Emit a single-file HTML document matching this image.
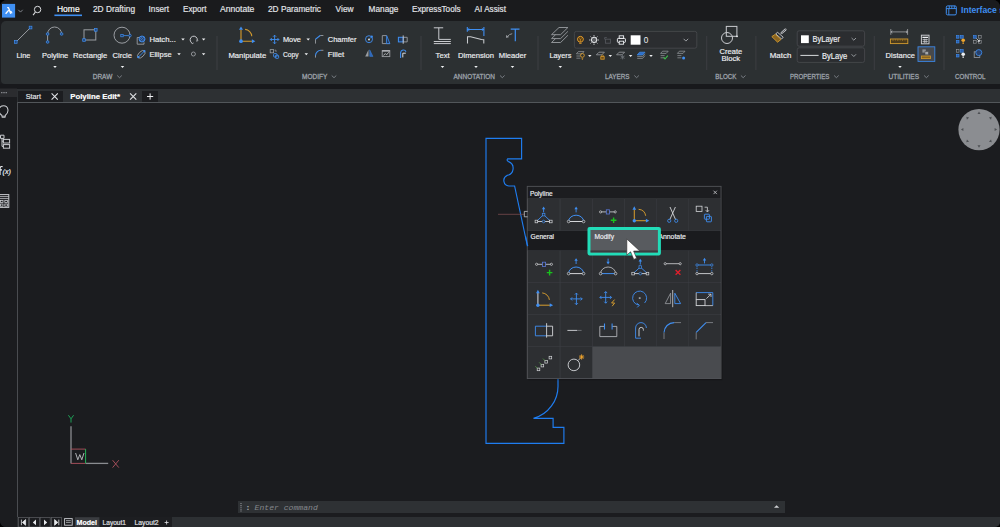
<!DOCTYPE html>
<html>
<head>
<meta charset="utf-8">
<title>Polyline Edit</title>
<style>
*{box-sizing:border-box;margin:0;padding:0}
html,body{width:1000px;height:527px;overflow:hidden;background:#000;font-family:"Liberation Sans",sans-serif}
#app{position:relative;width:1000px;height:527px;overflow:hidden;background:#1b1c1f;border-radius:7px 7px 5px 6px}
.a{position:absolute}
#menubar{left:0;top:0;width:1000px;height:21px;background:#1a1b1d}
#ribbon{left:1px;top:20.5px;width:1000px;height:63px;background:#2c3032;border-radius:5px 0 0 4px}
#band{left:0;top:83.5px;width:1000px;height:5px;background:#18191c}
#tabstrip{left:0;top:88.5px;width:1000px;height:14px;background:#2d3033}
#side{left:0;top:97px;width:17px;height:430px;background:#1b1c1f}
#tabline{left:17px;top:102px;width:983px;height:1px;background:#52565a}
#sideline{left:17px;top:102px;width:1px;height:415px;background:#4a4c50}
#tab1{left:18px;top:91px;width:44.5px;height:11px;background:#1c1d20}
#tab3{left:141.5px;top:91px;width:16.5px;height:11px;background:#1c1d20}
#bottombar{left:17px;top:516.5px;width:983px;height:11px;background:#2d3033}
#btabs{left:18px;top:517px;width:154px;height:10px;background:#1d1e21}
#cmd{left:238px;top:501px;width:547px;height:12px;background:#2e3134}
#svg{position:absolute;left:0;top:0;font-family:"Liberation Sans",sans-serif}
</style>
</head>
<body>
<div id="app">
<div class="a" id="menubar"></div>
<div class="a" id="ribbon"></div>
<div class="a" id="band"></div>
<div class="a" id="tabstrip"></div>
<div class="a" id="side"></div>
<div class="a" id="tab1"></div>
<div class="a" id="tab3"></div>
<div class="a" id="tabline"></div>
<div class="a" id="sideline"></div>
<div class="a" id="cmd"></div>
<div class="a" id="bottombar"></div>
<div class="a" id="btabs"></div>
<svg id="svg" width="1000" height="527" viewBox="0 0 1000 527">
<rect x="2" y="3.9" width="13.1" height="13.7" fill="#3f8ff2"/>
<path d="M7.2,7.6H8.5L10.7,13.7" stroke="#fff" stroke-width="1.3" fill="none" stroke-linejoin="round"/>
<path d="M8.8,10.1L5.6,13.8" stroke="#fff" stroke-width="1.4" fill="none"/>
<path d="M9.9,11.3Q12.1,11.3 11.7,13.4" stroke="#fff" stroke-width="1.1" fill="none"/>
<path d="M18.3,9.8l2.2,2.3l2.2,-2.3" fill="none" stroke="#8a8f96" stroke-width="0.9"/>
<circle cx="37.6" cy="9.5" r="3.2" fill="none" stroke="#dcdee1" stroke-width="1"/>
<path d="M35.4,12l-2.3,3.1" stroke="#dcdee1" stroke-width="1.1" fill="none"/>
<text x="57.0" y="11.70" font-size="8.6" fill="#ffffff" textLength="22.6" lengthAdjust="spacingAndGlyphs" stroke="#ffffff" stroke-width="0.18">Home</text>
<rect x="54.4" y="14.5" width="27.6" height="1.6" fill="#3f8ff2"/>
<text x="93.0" y="11.70" font-size="8.6" fill="#e2e4e8" textLength="42.0" lengthAdjust="spacingAndGlyphs" stroke="#e2e4e8" stroke-width="0.18">2D Drafting</text>
<text x="148.6" y="11.70" font-size="8.6" fill="#e2e4e8" textLength="20.4" lengthAdjust="spacingAndGlyphs" stroke="#e2e4e8" stroke-width="0.18">Insert</text>
<text x="183.0" y="11.70" font-size="8.6" fill="#e2e4e8" textLength="23.4" lengthAdjust="spacingAndGlyphs" stroke="#e2e4e8" stroke-width="0.18">Export</text>
<text x="220.0" y="11.70" font-size="8.6" fill="#e2e4e8" textLength="34.4" lengthAdjust="spacingAndGlyphs" stroke="#e2e4e8" stroke-width="0.18">Annotate</text>
<text x="268.0" y="11.70" font-size="8.6" fill="#e2e4e8" textLength="53.0" lengthAdjust="spacingAndGlyphs" stroke="#e2e4e8" stroke-width="0.18">2D Parametric</text>
<text x="335.6" y="11.70" font-size="8.6" fill="#e2e4e8" textLength="18.0" lengthAdjust="spacingAndGlyphs" stroke="#e2e4e8" stroke-width="0.18">View</text>
<text x="368.6" y="11.70" font-size="8.6" fill="#e2e4e8" textLength="29.8" lengthAdjust="spacingAndGlyphs" stroke="#e2e4e8" stroke-width="0.18">Manage</text>
<text x="412.0" y="11.70" font-size="8.6" fill="#e2e4e8" textLength="48.6" lengthAdjust="spacingAndGlyphs" stroke="#e2e4e8" stroke-width="0.18">ExpressTools</text>
<text x="474.6" y="11.70" font-size="8.6" fill="#e2e4e8" textLength="31.4" lengthAdjust="spacingAndGlyphs" stroke="#e2e4e8" stroke-width="0.18">AI Assist</text>
<rect x="946.3" y="5.9" width="10" height="9" rx="1.3" fill="none" stroke="#3f8ff2" stroke-width="1"/>
<path d="M946.3,8.6h10M948.8,8.6v6.3M949.3,5.9v2.7M951.8,5.9v2.7M954.3,5.9v2.7" stroke="#3f8ff2" stroke-width="0.9" fill="none"/>
<text x="961.0" y="13.10" font-size="8.6" fill="#3f8ff2" textLength="43.0" lengthAdjust="spacingAndGlyphs" font-weight="bold">Interface s</text>
<path d="M16,42L30.5,27.6" stroke="#9a9da2" stroke-width="1" fill="none"/>
<rect x="14.4" y="40.6" width="2.7" height="2.7" fill="#234a80" stroke="#3f8ff2" stroke-width="0.7"/>
<rect x="29.2" y="26.2" width="2.7" height="2.7" fill="#234a80" stroke="#3f8ff2" stroke-width="0.7"/>
<text x="16.5" y="58.12" font-size="8.1" fill="#eceef1" textLength="13.8" lengthAdjust="spacingAndGlyphs" stroke="#eceef1" stroke-width="0.18">Line</text>
<path d="M47.6,42V34A7,7 0 0 1 61.6,34" stroke="#9a9da2" stroke-width="1" fill="none"/>
<circle cx="47.6" cy="34" r="1.35" fill="#234a80" stroke="#3f8ff2" stroke-width="0.7"/>
<circle cx="61.6" cy="34" r="1.35" fill="#234a80" stroke="#3f8ff2" stroke-width="0.7"/>
<circle cx="47.6" cy="42" r="1.35" fill="#234a80" stroke="#3f8ff2" stroke-width="0.7"/>
<text x="42.0" y="58.12" font-size="8.1" fill="#eceef1" textLength="26.3" lengthAdjust="spacingAndGlyphs" stroke="#eceef1" stroke-width="0.18">Polyline</text>
<path d="M53.25,66.1h3.5l-1.75,1.9z" fill="#f0f1f3"/>
<rect x="84" y="29.8" width="11.8" height="10.2" fill="none" stroke="#9a9da2" stroke-width="1"/>
<rect x="94.5" y="28.6" width="2.6" height="2.6" fill="#234a80" stroke="#3f8ff2" stroke-width="0.7"/>
<rect x="82.7" y="38.7" width="2.6" height="2.6" fill="#234a80" stroke="#3f8ff2" stroke-width="0.7"/>
<text x="73.0" y="58.12" font-size="8.1" fill="#eceef1" textLength="34.3" lengthAdjust="spacingAndGlyphs" stroke="#eceef1" stroke-width="0.18">Rectangle</text>
<circle cx="122" cy="35.2" r="8" fill="none" stroke="#9a9da2" stroke-width="1"/>
<path d="M123.4,35.6H128.8" stroke="#3f8ff2" stroke-width="0.8"/>
<rect x="120.8" y="34.4" width="2.4" height="2.4" fill="#1f3558" stroke="#3f8ff2" stroke-width="0.7"/>
<circle cx="130" cy="35.6" r="1.25" fill="#1f3558" stroke="#3f8ff2" stroke-width="0.7"/>
<text x="112.6" y="58.12" font-size="8.1" fill="#eceef1" textLength="19.4" lengthAdjust="spacingAndGlyphs" stroke="#eceef1" stroke-width="0.18">Circle</text>
<path d="M120.75,66.1h3.5l-1.75,1.9z" fill="#f0f1f3"/>
<path d="M139.5,37.5H137.2V44.2H144V42.3" stroke="#9a9da2" stroke-width="0.9" fill="none"/>
<circle cx="142" cy="39" r="3" fill="#24487c" stroke="#3f8ff2" stroke-width="0.9"/>
<path d="M140,41l4,-4M139.4,39.4l2.6,-2.6M142,41.6l2.6,-2.6" stroke="#6fa8f5" stroke-width="0.45"/>
<text x="149.4" y="42.22" font-size="8.1" fill="#eceef1" textLength="26.5" lengthAdjust="spacingAndGlyphs" stroke="#eceef1" stroke-width="0.18">Hatch...</text>
<path d="M181.25,38.6h3.5l-1.75,1.9z" fill="#f0f1f3"/>
<path d="M191.5,42.6A3.6,3.6 0 1 1 197.3,40.2" stroke="#c9cbcf" stroke-width="1" fill="none"/>
<path d="M191.3,42.4a1.2,1.2 0 0 0 2.2,0.6M196,40.5a1.1,1.1 0 0 0 2,-0.3" stroke="#c9cbcf" stroke-width="0.9" fill="none"/>
<path d="M201.85,38.6h3.5l-1.75,1.9z" fill="#f0f1f3"/>
<ellipse cx="141.3" cy="54.3" rx="4.6" ry="2.6" transform="rotate(-45 141.3 54.3)" fill="none" stroke="#9a9da2" stroke-width="0.9"/>
<path d="M138.5,57l5.6,-5.6" stroke="#3f8ff2" stroke-width="0.9"/>
<circle cx="138.3" cy="57.2" r="1.1" fill="#3f8ff2"/><circle cx="144.4" cy="51.2" r="1.1" fill="#3f8ff2"/>
<text x="149.4" y="56.82" font-size="8.1" fill="#eceef1" textLength="22.2" lengthAdjust="spacingAndGlyphs" stroke="#eceef1" stroke-width="0.18">Ellipse</text>
<path d="M177.25,53.3h3.5l-1.75,1.9z" fill="#f0f1f3"/>
<circle cx="193.4" cy="54" r="2" fill="none" stroke="#9a9da2" stroke-width="0.9"/>
<path d="M201.85,53.3h3.5l-1.75,1.9z" fill="#f0f1f3"/>
<text x="92.7" y="79.08" font-size="6.9" fill="#9ea3ab" textLength="19.6" lengthAdjust="spacingAndGlyphs" stroke="#9ea3ab" stroke-width="0.28">DRAW</text>
<path d="M117.2,75.5l2.3,2.2l2.3,-2.2" fill="none" stroke="#8b9098" stroke-width="0.8"/>
<rect x="216.5" y="36" width="1" height="34" fill="#3c3e42"/>
<path d="M241,41.2V29.400000000000002" stroke="#d29a2e" stroke-width="1.1440000000000001" fill="none"/>
<path d="M241,41.2H252.3" stroke="#d29a2e" stroke-width="1.1440000000000001" fill="none"/>
<path d="M238.976,29.800000000000004L241,26.400000000000002L243.024,29.800000000000004z" fill="#3f8ff2"/>
<path d="M251.9,39.176L255.3,41.2L251.9,43.224000000000004z" fill="#3f8ff2"/>
<path d="M245.1,29.4A7.4,7.4 0 0 1 251.8,36.2" stroke="#d29a2e" stroke-width="1.056" fill="none"/>
<circle cx="241" cy="41.2" r="1.848" fill="#3f8ff2"/>
<text x="228.4" y="58.12" font-size="8.1" fill="#eceef1" textLength="37.8" lengthAdjust="spacingAndGlyphs" stroke="#eceef1" stroke-width="0.18">Manipulate</text>
<path d="M270.3,39.5H278.90000000000003M274.6,35.2V43.8" stroke="#3f8ff2" stroke-width="0.9" fill="none"/>
<path d="M273.1,36.7L274.6,35.2L276.1,36.7M273.1,42.3L274.6,43.8L276.1,42.3M271.8,38.0L270.3,39.5L271.8,41.0M277.40000000000003,38.0L278.90000000000003,39.5L277.40000000000003,41.0" stroke="#3f8ff2" stroke-width="0.9" fill="none"/>
<text x="282.9" y="42.22" font-size="8.1" fill="#eceef1" textLength="18.1" lengthAdjust="spacingAndGlyphs" stroke="#eceef1" stroke-width="0.18">Move</text>
<path d="M306.45,38.6h3.5l-1.75,1.9z" fill="#f0f1f3"/>
<rect x="270.2" y="49.6" width="3.4" height="3.2" fill="none" stroke="#9a9da2" stroke-width="0.8"/>
<path d="M274.6,50.2h1.4v1.8" stroke="#9a9da2" stroke-width="0.7" fill="none"/>
<rect x="273.6" y="53.6" width="3.4" height="3.4" rx="0.8" fill="none" stroke="#3f8ff2" stroke-width="0.9"/>
<rect x="275.4" y="55.2" width="3.2" height="3.2" rx="0.8" fill="none" stroke="#3f8ff2" stroke-width="0.9"/>
<text x="282.9" y="56.82" font-size="8.1" fill="#eceef1" textLength="15.6" lengthAdjust="spacingAndGlyphs" stroke="#eceef1" stroke-width="0.18">Copy</text>
<path d="M304.55,53.3h3.5l-1.75,1.9z" fill="#f0f1f3"/>
<path d="M315.5,43.6V39.2" stroke="#9a9da2" stroke-width="0.9"/><path d="M320.2,35.5H323.4" stroke="#9a9da2" stroke-width="0.9"/>
<path d="M315.5,39.2L320.2,35.5" stroke="#3f8ff2" stroke-width="1.1" fill="none"/>
<text x="327.8" y="42.22" font-size="8.1" fill="#eceef1" textLength="28.7" lengthAdjust="spacingAndGlyphs" stroke="#eceef1" stroke-width="0.18">Chamfer</text>
<path d="M315.5,57.6V55" stroke="#9a9da2" stroke-width="0.9"/><path d="M321,50.3H323.4" stroke="#9a9da2" stroke-width="0.9"/>
<path d="M315.5,55.5A5.4,5.4 0 0 1 321,50.3" stroke="#3f8ff2" stroke-width="1.1" fill="none"/>
<text x="327.8" y="56.82" font-size="8.1" fill="#eceef1" textLength="16.4" lengthAdjust="spacingAndGlyphs" stroke="#eceef1" stroke-width="0.18">Fillet</text>
<circle cx="369" cy="39.2" r="3.5" fill="none" stroke="#3f8ff2" stroke-width="0.9"/>
<circle cx="369" cy="39.5" r="0.9" fill="#eceef1"/>
<path d="M369.6,38.8L371.6,36.8" stroke="#3f8ff2" stroke-width="0.8"/><circle cx="371.8" cy="36.7" r="1.1" fill="#3f8ff2"/>
<path d="M386.7,35.6H382.3V43.6H389.8" fill="none" stroke="#9a9da2" stroke-width="0.9"/>
<path d="M386.7,35.6L389.9,43.6H386.4z" fill="#203a62" stroke="#3f8ff2" stroke-width="0.8"/>
<rect x="398.4" y="37.3" width="4.8" height="4.6" fill="#203a62" stroke="#3f8ff2" stroke-width="1"/>
<path d="M403.2,37.3H407.2V41.9H403.2" fill="none" stroke="#9a9da2" stroke-width="0.9"/>
<path d="M403.2,35.4V43.8" stroke="#c9cbcf" stroke-width="0.9"/>
<path d="M368.5,49.8V56.4H365.2z" fill="#9a9da2"/>
<path d="M369.7,49.8V56.4H373z" fill="#2f66b8" stroke="#3f8ff2" stroke-width="0.4"/>
<rect x="382.2" y="50.6" width="7.6" height="6" fill="none" stroke="#9a9da2" stroke-width="0.9"/>
<path d="M382.2,51H389.8" stroke="#c9cbcf" stroke-width="1.1"/>
<path d="M383.4,55.4l2,-1.8l1.2,1.2l2.2,-2.6" stroke="#c9cbcf" stroke-width="0.8" fill="none"/>
<path d="M400.6,58V52.6A2.8,2.8 0 0 1 406,51.8" stroke="#3f8ff2" stroke-width="1.1" fill="none"/>
<path d="M402.8,57.4V53.2H405.8" stroke="#eceef1" stroke-width="0.9" fill="none"/>
<text x="302.0" y="79.08" font-size="6.9" fill="#9ea3ab" textLength="25.3" lengthAdjust="spacingAndGlyphs" stroke="#9ea3ab" stroke-width="0.28">MODIFY</text>
<path d="M331.7,75.5l2.3,2.2l2.3,-2.2" fill="none" stroke="#8b9098" stroke-width="0.8"/>
<rect x="420.5" y="36" width="1" height="34" fill="#3c3e42"/>
<path d="M433.8,27.8H443.2M438.8,27.8V39.4H450.8M433.8,41.5H450.8M433.8,43.6H450.8" stroke="#c9cbcf" stroke-width="1" fill="none"/>
<text x="435.6" y="58.12" font-size="8.1" fill="#eceef1" textLength="14.0" lengthAdjust="spacingAndGlyphs" stroke="#eceef1" stroke-width="0.18">Text</text>
<path d="M440.75,66.1h3.5l-1.75,1.9z" fill="#f0f1f3"/>
<path d="M467.3,29.5H483.9M467.3,26.9V31.8M483.9,26.9V36" stroke="#3f8ff2" stroke-width="1.1" fill="none"/>
<path d="M469.4,28.2L467.6,29.5L469.4,30.8M481.8,28.2L483.6,29.5L481.8,30.8" stroke="#3f8ff2" stroke-width="0.8" fill="none"/>
<path d="M467.5,43.6V36.8H470.6L481.4,39.5L483.8,39.8V43.6" stroke="#c9cbcf" stroke-width="1.05" fill="none"/>
<text x="458.1" y="58.12" font-size="8.1" fill="#eceef1" textLength="35.9" lengthAdjust="spacingAndGlyphs" stroke="#eceef1" stroke-width="0.18">Dimension</text>
<path d="M474.25,66.1h3.5l-1.75,1.9z" fill="#f0f1f3"/>
<path d="M510.7,29.2H519.5M515.3,29.2V41.2" stroke="#3f8ff2" stroke-width="1.2" fill="none"/>
<path d="M512.2,33.7Q509,34.2 507.4,36.6" stroke="#9a9da2" stroke-width="0.9" fill="none"/>
<path d="M506,34.9L506.2,38L509.2,37z" fill="#9a9da2"/>
<text x="498.8" y="58.12" font-size="8.1" fill="#eceef1" textLength="27.5" lengthAdjust="spacingAndGlyphs" stroke="#eceef1" stroke-width="0.18">Mleader</text>
<path d="M510.75,66.1h3.5l-1.75,1.9z" fill="#f0f1f3"/>
<text x="453.5" y="79.08" font-size="6.9" fill="#9ea3ab" textLength="41.5" lengthAdjust="spacingAndGlyphs" stroke="#9ea3ab" stroke-width="0.28">ANNOTATION</text>
<path d="M500.0,75.5l2.3,2.2l2.3,-2.2" fill="none" stroke="#8b9098" stroke-width="0.8"/>
<rect x="537.5" y="36" width="1" height="34" fill="#3c3e42"/>
<path d="M559,27.5H567.9L560.6,34.7H551.5z" fill="none" stroke="#9a9da2" stroke-width="0.9"/>
<path d="M555.6,34.7L551.5,38.6H560.6L567.9,31.4" fill="none" stroke="#9a9da2" stroke-width="0.9"/>
<path d="M555.6,38.6L551.5,42.5H560.6L567.9,35.3" fill="none" stroke="#9a9da2" stroke-width="0.9"/>
<text x="549.4" y="58.12" font-size="8.1" fill="#eceef1" textLength="21.9" lengthAdjust="spacingAndGlyphs" stroke="#eceef1" stroke-width="0.18">Layers</text>
<path d="M558.55,66.1h3.5l-1.75,1.9z" fill="#f0f1f3"/>
<rect x="574.4" y="31.4" width="122.4" height="16.8" rx="2" fill="#2b2d30" stroke="#46484c" stroke-width="0.9"/>
<path d="M579.1,42C577.5,40.6 577.3,39.6 577.5,38.6A3,3 0 0 1 583.3,38.6C583.5,39.6 583.3,40.6 581.7,42z" fill="#5a3f14" stroke="#e8a02c" stroke-width="1"/>
<path d="M579.2,43.3h2.4" stroke="#e8a02c" stroke-width="0.9"/>
<path d="M580.4,41.8V39.4M579.4,38.4l1,1.1l1,-1.1" stroke="#e8a02c" stroke-width="0.6" fill="none"/>
<circle cx="594.1" cy="39.9" r="2.7" fill="#5c5e62" stroke="#eceef1" stroke-width="1"/>
<path d="M594,35.2v1.2M594,43.6v1.2M589.2,40h1.2M597.6,40h1.2M590.6,36.6l0.9,0.9M596.5,42.5l0.9,0.9M590.6,43.4l0.9,-0.9M596.5,37.5l0.9,-0.9" stroke="#eceef1" stroke-width="0.9"/>
<path d="M604.6,39.4V37.6H606.8" stroke="#54575c" stroke-width="0.9" fill="none"/><rect x="605.4" y="39.2" width="5" height="4" fill="none" stroke="#54575c" stroke-width="0.9"/>
<rect x="619.2" y="35.8" width="4.4" height="2.6" fill="none" stroke="#eceef1" stroke-width="0.9"/>
<rect x="617.4" y="38.4" width="8" height="4" rx="0.8" fill="none" stroke="#eceef1" stroke-width="1"/>
<rect x="619.2" y="41.2" width="4.4" height="3" fill="#2b2d30" stroke="#eceef1" stroke-width="0.9"/>
<rect x="630.7" y="35.3" width="9.8" height="9.4" fill="#ffffff"/>
<text x="643.8" y="42.95" font-size="8.2" fill="#eceef1">0</text>
<path d="M683.6,38.8l2.3,2.3l2.3,-2.3" fill="none" stroke="#b4b7bc" stroke-width="0.8"/>
<path d="M578.4,51.6H584L582,53.800000000000004H576.4z" stroke="#9a9da2" stroke-width="0.7" fill="none"/>
<path d="M576.4,56.0H580.4M576.4,58.2H580.4" stroke="#9a9da2" stroke-width="0.7" fill="none"/>
<circle cx="582.4" cy="55.4" r="1.9" fill="none" stroke="#d79a2c" stroke-width="0.9"/><path d="M581.6,58.4h1.6M581.8,59.4h1.2" stroke="#d79a2c" stroke-width="0.7"/>
<path d="M588.05,55.1h3.5l-1.75,1.9z" fill="#f0f1f3"/>
<path d="M599.0,52.2H604.4L601.8,54.800000000000004H596.4z" fill="none" stroke="#9a9da2" stroke-width="0.8"/>
<rect x="600.8" y="56.6" width="3.4" height="2.6" fill="#6b4a16" stroke="#d79a2c" stroke-width="0.8"/><path d="M601.6,56.6V55.8A0.9,0.9 0 0 1 603.4,55.8V56.6" stroke="#d79a2c" stroke-width="0.7" fill="none"/>
<path d="M608.55,55.1h3.5l-1.75,1.9z" fill="#f0f1f3"/>
<path d="M619.2,52.2H624.6L622.0,54.800000000000004H616.6z" fill="none" stroke="#9a9da2" stroke-width="0.8"/>
<path d="M622.6,55v4.4M620.6,56l4,2.4M620.6,58.4l4,-2.4" stroke="#6f7379" stroke-width="0.8"/>
<path d="M628.85,55.1h3.5l-1.75,1.9z" fill="#f0f1f3"/>
<path d="M639.6,52.2H645L642.6,55H637.2z" fill="#2f6fc8" stroke="#3f8ff2" stroke-width="0.7"/>
<path d="M637.2,56.6H642.6L645,53.8M637.2,58.4H642.6L645,55.6" fill="none" stroke="#9a9da2" stroke-width="0.7"/>
<path d="M649.25,55.1h3.5l-1.75,1.9z" fill="#f0f1f3"/>
<path d="M662.6,51.2H668.2L666.2,53.400000000000006H660.6z" stroke="#9a9da2" stroke-width="0.7" fill="none"/>
<path d="M660.6,55.6H664.6M660.6,57.800000000000004H664.6" stroke="#9a9da2" stroke-width="0.7" fill="none"/>
<path d="M663.6,57.4l1.4,1.6l2.8,-3.4" stroke="#3cc04a" stroke-width="1.1" fill="none"/>
<path d="M679.4,51.2H685L683,53.400000000000006H677.4z" stroke="#9a9da2" stroke-width="0.7" fill="none"/>
<path d="M677.4,55.6H681.4M677.4,57.800000000000004H681.4" stroke="#9a9da2" stroke-width="0.7" fill="none"/>
<circle cx="683.6" cy="58" r="1.5" fill="#3f8ff2"/>
<text x="605.0" y="79.08" font-size="6.9" fill="#9ea3ab" textLength="24.4" lengthAdjust="spacingAndGlyphs" stroke="#9ea3ab" stroke-width="0.28">LAYERS</text>
<path d="M634.3,75.5l2.3,2.2l2.3,-2.2" fill="none" stroke="#8b9098" stroke-width="0.8"/>
<rect x="706.2" y="36" width="1" height="34" fill="#3c3e42"/>
<circle cx="727" cy="38" r="5.5" fill="none" stroke="#c9cbcf" stroke-width="1"/>
<rect x="726.3" y="26.4" width="10.6" height="9.9" fill="none" stroke="#c9cbcf" stroke-width="1"/>
<circle cx="737" cy="36.3" r="0.9" fill="#eceef1"/>
<text x="719.6" y="54.42" font-size="8.1" fill="#eceef1" textLength="22.6" lengthAdjust="spacingAndGlyphs" stroke="#eceef1" stroke-width="0.18">Create</text>
<text x="721.5" y="60.92" font-size="8.1" fill="#eceef1" textLength="18.5" lengthAdjust="spacingAndGlyphs" stroke="#eceef1" stroke-width="0.18">Block</text>
<text x="715.3" y="79.08" font-size="6.9" fill="#9ea3ab" textLength="21.2" lengthAdjust="spacingAndGlyphs" stroke="#9ea3ab" stroke-width="0.28">BLOCK</text>
<path d="M740.9,75.5l2.3,2.2l2.3,-2.2" fill="none" stroke="#8b9098" stroke-width="0.8"/>
<rect x="755.4" y="36" width="1" height="34" fill="#3c3e42"/>
<path d="M785.4,29.6L781.6,33" stroke="#c9cbcf" stroke-width="2.2" stroke-linecap="round" fill="none"/>
<path d="M785.4,29.6L781.6,33" stroke="#2d2f32" stroke-width="0.8" stroke-linecap="round" fill="none"/>
<path d="M777.4,32.2L783.2,37.2L781.6,39L775.8,34z" fill="none" stroke="#c9cbcf" stroke-width="0.9"/>
<path d="M775.2,34.4L781,39.4L777.6,42.2L771.8,36.6z" fill="#8a6420" stroke="#d29a2e" stroke-width="0.9"/>
<text x="769.8" y="58.12" font-size="8.1" fill="#eceef1" textLength="21.5" lengthAdjust="spacingAndGlyphs" stroke="#eceef1" stroke-width="0.18">Match</text>
<rect x="797.2" y="30.8" width="67.4" height="15.4" rx="2" fill="#2b2d30" stroke="#46484c" stroke-width="0.9"/>
<rect x="797.2" y="47.8" width="67.4" height="14.6" rx="2" fill="#2b2d30" stroke="#46484c" stroke-width="0.9"/>
<rect x="801" y="35.3" width="7.8" height="7.8" fill="#ffffff"/>
<text x="812.5" y="42.30" font-size="8.6" fill="#eceef1" textLength="27.5" lengthAdjust="spacingAndGlyphs" stroke="#eceef1" stroke-width="0.18">ByLayer</text>
<path d="M851.6,38.0l2.2,2.2l2.2,-2.2" fill="none" stroke="#b4b7bc" stroke-width="0.8"/>
<path d="M800.4,55.4H818.6" stroke="#eceef1" stroke-width="0.9"/>
<text x="821.9" y="58.50" font-size="8.6" fill="#eceef1" textLength="25.3" lengthAdjust="spacingAndGlyphs" stroke="#eceef1" stroke-width="0.18">ByLaye</text>
<path d="M851.6,54.3l2.2,2.2l2.2,-2.2" fill="none" stroke="#b4b7bc" stroke-width="0.8"/>
<text x="790.0" y="79.08" font-size="6.9" fill="#9ea3ab" textLength="39.4" lengthAdjust="spacingAndGlyphs" stroke="#9ea3ab" stroke-width="0.28">PROPERTIES</text>
<path d="M834.1,75.5l2.3,2.2l2.3,-2.2" fill="none" stroke="#8b9098" stroke-width="0.8"/>
<rect x="873.8" y="36" width="1" height="34" fill="#3c3e42"/>
<path d="M890.8,31.9H907.6M890.8,29V34.8M907.6,29V34.8M892.4,30.8L891,31.9L892.4,33M906,30.8L907.4,31.9L906,33" stroke="#b4b6ba" stroke-width="0.7" fill="none"/>
<rect x="890.4" y="39" width="17.4" height="4.6" fill="#4a3a1c" stroke="#d29a2e" stroke-width="0.9"/>
<path d="M893,39.4v1.6M895.4,39.4v1.2M897.8,39.4v1.6M900.2,39.4v1.2M902.6,39.4v1.6M905,39.4v1.2" stroke="#d29a2e" stroke-width="0.5"/>
<text x="885.6" y="58.12" font-size="8.1" fill="#eceef1" textLength="29.4" lengthAdjust="spacingAndGlyphs" stroke="#eceef1" stroke-width="0.18">Distance</text>
<path d="M898.25,66.1h3.5l-1.75,1.9z" fill="#f0f1f3"/>
<rect x="921.4" y="35.2" width="7.6" height="8.6" fill="none" stroke="#c9cbcf" stroke-width="1"/>
<path d="M922.4,37.4h5.6" stroke="#eceef1" stroke-width="1.2"/><path d="M922.6,39.6h5.2M922.6,41.6h5.2M924.3,38.6v4.4M926.1,38.6v4.4" stroke="#c9cbcf" stroke-width="0.8"/>
<rect x="918" y="46.8" width="16.8" height="14.6" fill="#47494d" stroke="#3a86e6" stroke-width="0.9"/>
<rect x="922.4" y="49.4" width="3.4" height="3.2" fill="#8e9196"/><rect x="925" y="51.6" width="3.4" height="3.2" fill="#a4a7ab" stroke="#47494d" stroke-width="0.5"/>
<rect x="921.6" y="56" width="8.8" height="2.6" fill="#8a6420" stroke="#d29a2e" stroke-width="0.8"/>
<text x="888.5" y="79.08" font-size="6.9" fill="#9ea3ab" textLength="30.5" lengthAdjust="spacingAndGlyphs" stroke="#9ea3ab" stroke-width="0.28">UTILITIES</text>
<path d="M924.1,75.5l2.3,2.2l2.3,-2.2" fill="none" stroke="#8b9098" stroke-width="0.8"/>
<rect x="943.5" y="36" width="1" height="34" fill="#3c3e42"/>
<rect x="956.4" y="35.6" width="2.6" height="2.6" fill="#2a5caa" stroke="#3f8ff2" stroke-width="0.6"/>
<rect x="960.6" y="35.6" width="2.6" height="2.6" fill="#2a5caa" stroke="#3f8ff2" stroke-width="0.6"/>
<rect x="956.4" y="40.4" width="2.6" height="2.6" fill="#2a5caa" stroke="#3f8ff2" stroke-width="0.6"/>
<circle cx="963.2" cy="40.2" r="1.8" fill="#f0a52c"/><path d="M962.4,42.4h1.6v1.4h-1.6z" fill="#f0a52c"/>
<rect x="973.6" y="35.6" width="2.6" height="2.6" fill="#2a5caa" stroke="#3f8ff2" stroke-width="0.6"/>
<rect x="978.6" y="35.6" width="2.6" height="2.6" fill="none" stroke="#9a9da2" stroke-width="0.6"/>
<rect x="973.6" y="40.6" width="2.6" height="2.6" fill="none" stroke="#9a9da2" stroke-width="0.6"/>
<rect x="978.6" y="40.6" width="2.6" height="2.6" fill="none" stroke="#9a9da2" stroke-width="0.6"/>
<path d="M976.4,38.4l3,3M979.4,39.6v1.8h-1.8" stroke="#eceef1" stroke-width="0.7" fill="none"/>
<rect x="956.4" y="49.6" width="2.6" height="2.6" fill="none" stroke="#9a9da2" stroke-width="0.6"/>
<rect x="960.6" y="49.6" width="2.6" height="2.6" fill="#2a5caa" stroke="#3f8ff2" stroke-width="0.6"/>
<rect x="956.4" y="54.4" width="2.6" height="2.6" fill="#2a5caa" stroke="#3f8ff2" stroke-width="0.6"/>
<circle cx="963.2" cy="54.2" r="1.8" fill="#eceef1"/><path d="M962.4,56.4h1.6v1.4h-1.6z" fill="#eceef1"/>
<rect x="974.2" y="51.8" width="5.6" height="5.6" fill="none" stroke="#9a9da2" stroke-width="0.8"/>
<circle cx="978.8" cy="52.6" r="3" fill="#27406b" stroke="#3f8ff2" stroke-width="0.8"/>
<text x="955.0" y="79.08" font-size="6.9" fill="#9ea3ab" textLength="30.6" lengthAdjust="spacingAndGlyphs" stroke="#9ea3ab" stroke-width="0.28">CONTROL</text>
<rect x="0" y="88.5" width="17" height="8.5" fill="#2b2c2f"/>
<path d="M1.2,92.6h1.2M3.4,92.6h1.2M5.6,92.6h1.2" stroke="#9a9da2" stroke-width="1.1"/>
<text x="25.8" y="99.38" font-size="8.0" fill="#e4e6ea" textLength="15.2" lengthAdjust="spacingAndGlyphs" stroke="#e4e6ea" stroke-width="0.18">Start</text>
<path d="M51.6,93.4L57.800000000000004,99.6M57.800000000000004,93.4L51.6,99.6" stroke="#e2e4e7" stroke-width="1.1" fill="none"/>
<text x="70.2" y="99.38" font-size="8.0" fill="#ffffff" textLength="49.8" lengthAdjust="spacingAndGlyphs" font-weight="bold" stroke="#ffffff" stroke-width="0.18">Polyline Edit*</text>
<path d="M130.1,93.4L136.29999999999998,99.6M136.29999999999998,93.4L130.1,99.6" stroke="#e2e4e7" stroke-width="1.1" fill="none"/>
<path d="M147,96.5h6.2M150.1,93.4v6.2" stroke="#f0f1f3" stroke-width="1" fill="none"/>
<path d="M1.8,115.2C-2.8,112.2 -1.4,105.7 3.6,105.7C8.4,105.7 9.6,112.2 5.4,115.2L5,117.2H2.2z" fill="none" stroke="#c9cbcf" stroke-width="1.05"/>
<path d="M2.2,116.2H5.2" stroke="#c9cbcf" stroke-width="0.9"/>
<path d="M0.5,135.2H4V138.4H0.5zM2,138.4V146.4H3.4M2,141.2H3.4" stroke="#c9cbcf" stroke-width="1" fill="none"/>
<rect x="3.4" y="139.4" width="6.2" height="3.6" fill="none" stroke="#c9cbcf" stroke-width="1"/>
<rect x="3.4" y="144.6" width="6.2" height="3.6" fill="none" stroke="#c9cbcf" stroke-width="1"/>
<path d="M0,175V168.6Q0.2,166 2.6,166.6M-1.2,169.8H2" stroke="#eceef1" stroke-width="1.2" fill="none"/>
<text x="2.6" y="174.05" font-size="6.8" fill="#eceef1" textLength="8.4" lengthAdjust="spacingAndGlyphs" font-style="italic" stroke="#eceef1" stroke-width="0.18">(x)</text>
<rect x="-1" y="194.6" width="9.8" height="12.8" fill="none" stroke="#c9cbcf" stroke-width="1"/>
<path d="M-1,198.6H8.8M-1,196.6H8.8" stroke="#c9cbcf" stroke-width="0.8"/>
<rect x="0.4" y="200.4" width="2.6" height="2.2" fill="none" stroke="#c9cbcf" stroke-width="0.8"/><rect x="4.8" y="200.4" width="2.6" height="2.2" fill="none" stroke="#c9cbcf" stroke-width="0.8"/>
<rect x="0.4" y="204" width="2.6" height="2.2" fill="none" stroke="#c9cbcf" stroke-width="0.8"/><rect x="4.8" y="204" width="2.6" height="2.2" fill="none" stroke="#c9cbcf" stroke-width="0.8"/>
<path d="M558,379V385A33.6,33.6 0 0 1 533.5,418.4H553.1V427.4H563.9V443.3H486V138.4H521.6V158.8H507.6C506.6,160 507.4,161 508.6,161.6A7.2,7.2 0 0 1 507,175.4A5.6,5.6 0 0 0 508.8,186H514.6L527.6,247" fill="none" stroke="#1f7df0" stroke-width="1.15" stroke-linejoin="miter"/>
<path d="M498,214.3H524.5" stroke="#7a4a4e" stroke-width="0.8"/>
<circle cx="979" cy="129.6" r="20.6" fill="#8b8d91"/>
<path d="M0,-1.5L1.5,1L-1.5,1z" transform="translate(979.0,113.0) rotate(0)" fill="#4e5054"/>
<path d="M0,-1.5L1.5,1L-1.5,1z" transform="translate(990.7,117.9) rotate(45)" fill="#4e5054"/>
<path d="M0,-1.5L1.5,1L-1.5,1z" transform="translate(995.6,129.6) rotate(90)" fill="#4e5054"/>
<path d="M0,-1.5L1.5,1L-1.5,1z" transform="translate(990.7,141.3) rotate(135)" fill="#4e5054"/>
<path d="M0,-1.5L1.5,1L-1.5,1z" transform="translate(979.0,146.2) rotate(180)" fill="#4e5054"/>
<path d="M0,-1.5L1.5,1L-1.5,1z" transform="translate(967.3,141.3) rotate(225)" fill="#4e5054"/>
<path d="M0,-1.5L1.5,1L-1.5,1z" transform="translate(962.4,129.6) rotate(270)" fill="#4e5054"/>
<path d="M0,-1.5L1.5,1L-1.5,1z" transform="translate(967.3,117.9) rotate(315)" fill="#4e5054"/>
<path d="M71,463.4V426.2" stroke="#8a8c90" stroke-width="1.3"/>
<path d="M85.6,463.4H108.2" stroke="#8a8c90" stroke-width="1.3"/>
<path d="M71,449.1H85.6" stroke="#b0525f" stroke-width="0.9"/><path d="M71,463.4H85.6" stroke="#b0525f" stroke-width="0.9"/>
<path d="M85.6,449.1V463.4" stroke="#22c55e" stroke-width="0.9"/>
<path d="M75.6,453L77.8,459.8L79.8,454.6L81.8,459.8L84,453" fill="none" stroke="#c8cacd" stroke-width="0.85" stroke-linejoin="miter"/>
<path d="M68.4,415.2L71,418.8L73.6,415.2M71,418.8V422.6" stroke="#1fae5c" stroke-width="0.9" fill="none"/>
<path d="M112.6,460.2L118.8,467.6M118.8,460.2L112.6,467.6" stroke="#b0525f" stroke-width="0.9" fill="none"/>
<path d="M241,503v8.4" stroke="#8a8d92" stroke-width="1.2" stroke-dasharray="1,0.9"/>
<text x="245.4" y="510.32" font-size="8.1" fill="#a0a3a8" font-family="Liberation Mono" font-weight="bold" stroke="#a0a3a8" stroke-width="0.18">:</text>
<text x="254.6" y="510.22" font-size="8.1" fill="#85888d" font-family="Liberation Mono" textLength="63.2" lengthAdjust="spacingAndGlyphs" font-style="italic">Enter command</text>
<path d="M774,507.8L776.6,505.2L779.2,507.8z" fill="#d0d2d5"/>
<rect x="18.6" y="517.4" width="10" height="9.6" fill="#1b1c1f" stroke="#5c5e62" stroke-width="0.7"/>
<rect x="29.4" y="517.4" width="10" height="9.6" fill="#1b1c1f" stroke="#5c5e62" stroke-width="0.7"/>
<rect x="40.2" y="517.4" width="10" height="9.6" fill="#1b1c1f" stroke="#5c5e62" stroke-width="0.7"/>
<rect x="51.6" y="517.4" width="10" height="9.6" fill="#1b1c1f" stroke="#5c5e62" stroke-width="0.7"/>
<path d="M25.6,519.6L22.4,522.4L25.6,525.2zM21.4,519.6v5.6" fill="#e6e8eb" stroke="#e6e8eb" stroke-width="0.8"/>
<path d="M36,519.6L32.8,522.4L36,525.2z" fill="#e6e8eb"/>
<path d="M44,519.6L47.2,522.4L44,525.2z" fill="#e6e8eb"/>
<path d="M54.6,519.6L57.8,522.4L54.6,525.2zM58.8,519.6v5.6" fill="#e6e8eb" stroke="#e6e8eb" stroke-width="0.8"/>
<rect x="64.6" y="518.6" width="7.6" height="6.6" fill="none" stroke="#c9cbcf" stroke-width="0.9"/><path d="M66,520.6h4.8M66,522.4h4.8" stroke="#c9cbcf" stroke-width="0.7"/>
<rect x="75" y="517.2" width="24.4" height="10" fill="#3a3c40"/>
<text x="76.6" y="525.24" font-size="7.6" fill="#ffffff" textLength="20.4" lengthAdjust="spacingAndGlyphs" font-weight="bold" stroke="#ffffff" stroke-width="0.18">Model</text>
<text x="102.6" y="525.24" font-size="7.6" fill="#e2e4e8" textLength="23.4" lengthAdjust="spacingAndGlyphs" stroke="#e2e4e8" stroke-width="0.18">Layout1</text>
<text x="134.6" y="525.24" font-size="7.6" fill="#e2e4e8" textLength="24.0" lengthAdjust="spacingAndGlyphs" stroke="#e2e4e8" stroke-width="0.18">Layout2</text>
<path d="M164.6,522.5h4M166.6,520.5v4" stroke="#e2e4e8" stroke-width="0.8"/>
<rect x="528.3" y="187.4" width="194.30000000000004" height="192.9" fill="#000" opacity="0.18"/>
<rect x="527.3" y="186.4" width="193.70000000000005" height="192.1" fill="#3e4044" stroke="#505256" stroke-width="1"/>
<rect x="527.8" y="186.9" width="192.7" height="11.5" fill="#1c1d20"/>
<text x="529.9" y="196.34" font-size="7.6" fill="#eceef1" textLength="22.7" lengthAdjust="spacingAndGlyphs" stroke="#eceef1" stroke-width="0.18">Polyline</text>
<path d="M713.5,190.70000000000002L716.9000000000001,194.1M716.9000000000001,190.70000000000002L713.5,194.1" stroke="#c9cbcf" stroke-width="0.8" fill="none"/>
<rect x="528.0" y="198.7" width="31.7" height="31.6" fill="#2d2f32"/>
<rect x="560.4" y="198.7" width="31.7" height="31.6" fill="#2d2f32"/>
<rect x="592.6" y="198.7" width="31.7" height="31.6" fill="#2d2f32"/>
<rect x="624.8" y="198.7" width="31.7" height="31.6" fill="#2d2f32"/>
<rect x="656.9" y="198.7" width="31.7" height="31.6" fill="#2d2f32"/>
<rect x="689.0" y="198.7" width="31.7" height="31.6" fill="#2d2f32"/>
<rect x="528.0" y="250.5" width="31.7" height="31.6" fill="#2d2f32"/>
<rect x="560.4" y="250.5" width="31.7" height="31.6" fill="#2d2f32"/>
<rect x="592.6" y="250.5" width="31.7" height="31.6" fill="#2d2f32"/>
<rect x="624.8" y="250.5" width="31.7" height="31.6" fill="#2d2f32"/>
<rect x="656.9" y="250.5" width="31.7" height="31.6" fill="#2d2f32"/>
<rect x="689.0" y="250.5" width="31.7" height="31.6" fill="#2d2f32"/>
<rect x="528.0" y="282.6" width="31.7" height="31.6" fill="#2d2f32"/>
<rect x="560.4" y="282.6" width="31.7" height="31.6" fill="#2d2f32"/>
<rect x="592.6" y="282.6" width="31.7" height="31.6" fill="#2d2f32"/>
<rect x="624.8" y="282.6" width="31.7" height="31.6" fill="#2d2f32"/>
<rect x="656.9" y="282.6" width="31.7" height="31.6" fill="#2d2f32"/>
<rect x="689.0" y="282.6" width="31.7" height="31.6" fill="#2d2f32"/>
<rect x="528.0" y="314.7" width="31.7" height="31.6" fill="#2d2f32"/>
<rect x="560.4" y="314.7" width="31.7" height="31.6" fill="#2d2f32"/>
<rect x="592.6" y="314.7" width="31.7" height="31.6" fill="#2d2f32"/>
<rect x="624.8" y="314.7" width="31.7" height="31.6" fill="#2d2f32"/>
<rect x="656.9" y="314.7" width="31.7" height="31.6" fill="#2d2f32"/>
<rect x="689.0" y="314.7" width="31.7" height="31.6" fill="#2d2f32"/>
<rect x="528.0" y="346.8" width="31.7" height="31.3" fill="#2d2f32"/>
<rect x="560.4" y="346.8" width="31.7" height="31.3" fill="#2d2f32"/>
<rect x="592.6" y="346.8" width="128" height="31.3" fill="#494b4f"/>
<rect x="527.8" y="230.8" width="192.7" height="19.5" fill="#1a1b1e"/>
<text x="530.6" y="239.44" font-size="7.6" fill="#eceef1" textLength="23.5" lengthAdjust="spacingAndGlyphs" stroke="#eceef1" stroke-width="0.18">General</text>
<text x="658.4" y="239.44" font-size="7.6" fill="#eceef1" textLength="27.5" lengthAdjust="spacingAndGlyphs" stroke="#eceef1" stroke-width="0.18">Annotate</text>
<rect x="589" y="228.4" width="70.4" height="25.5" rx="0.6" fill="#585b5f" stroke="#22dcb8" stroke-width="3"/>
<rect x="590.6" y="250.4" width="67.2" height="2" fill="#3a3c40"/>
<text x="594.4" y="239.44" font-size="7.6" fill="#eceef1" textLength="19.6" lengthAdjust="spacingAndGlyphs" stroke="#eceef1" stroke-width="0.18">Modify</text>
<path d="M543.6,212.4V208.5" stroke="#3f8ff2" stroke-width="0.9"/><path d="M541.9,209.2L543.6,206.6L545.3000000000001,209.2z" fill="#3f8ff2"/>
<path d="M536.4,221.5L543.6,214.6L550.8000000000001,221.5" stroke="#3f8ff2" stroke-width="0.9" fill="none"/>
<path d="M536.4,221.5H550.8000000000001" stroke="#d4d6d9" stroke-width="0.9"/>
<rect x="542.3000000000001" y="213.29999999999998" width="2.6" height="2.6" fill="#2d2f32" stroke="#3f8ff2" stroke-width="0.7"/>
<rect x="535.1" y="220.2" width="2.6" height="2.6" fill="#2d2f32" stroke="#d4d6d9" stroke-width="0.7"/>
<rect x="549.5000000000001" y="220.2" width="2.6" height="2.6" fill="#2d2f32" stroke="#d4d6d9" stroke-width="0.7"/>
<circle cx="543.6" cy="221.5" r="1.3" fill="#2d2f32" stroke="#3f8ff2" stroke-width="0.7"/>
<path d="M576.1,212.4V208.5" stroke="#3f8ff2" stroke-width="0.9"/><path d="M574.4,209.2L576.1,206.6L577.8000000000001,209.2z" fill="#3f8ff2"/>
<path d="M568.6,221.5A7.5,6.3 0 0 1 583.6,221.5" stroke="#3f8ff2" stroke-width="1" fill="none"/>
<path d="M568.6,221.5H583.6" stroke="#d4d6d9" stroke-width="1"/>
<circle cx="568.6" cy="221.5" r="1.3" fill="#2d2f32" stroke="#d4d6d9" stroke-width="0.7"/>
<circle cx="583.6" cy="221.5" r="1.3" fill="#2d2f32" stroke="#d4d6d9" stroke-width="0.7"/>
<path d="M600.6,211.9H615.2" stroke="#d4d6d9" stroke-width="0.8"/>
<circle cx="600.6" cy="211.9" r="1.1" fill="#2d2f32" stroke="#d4d6d9" stroke-width="0.7"/>
<circle cx="615.2" cy="211.9" r="1.1" fill="#2d2f32" stroke="#d4d6d9" stroke-width="0.7"/>
<rect x="606.3000000000001" y="209.8" width="3.2" height="4.2" fill="#2d2f32" stroke="#5a78d8" stroke-width="0.8"/>
<path d="M610.8000000000001,220.2H616.4M613.6,217.39999999999998V223.0" stroke="#18c21c" stroke-width="1.4"/>
<path d="M634.3,220.7V209.29999999999998" stroke="#d29a2e" stroke-width="1.04" fill="none"/>
<path d="M634.3,220.7H646.3" stroke="#d29a2e" stroke-width="1.04" fill="none"/>
<path d="M632.4599999999999,209.7L634.3,206.29999999999998L636.14,209.7z" fill="#3f8ff2"/>
<path d="M645.9,218.85999999999999L649.3,220.7L645.9,222.54z" fill="#3f8ff2"/>
<path d="M638.6,209.3A7.8,7.8 0 0 1 645.7,215.8" stroke="#d29a2e" stroke-width="0.96" fill="none"/>
<circle cx="634.3" cy="220.7" r="1.6800000000000002" fill="#3f8ff2"/>
<path d="M670,207L675.6,219.6M675.4,207L669.8,219.6" stroke="#d4d6d9" stroke-width="0.9" fill="none"/>
<circle cx="669.2" cy="220.8" r="1.6" fill="none" stroke="#3f8ff2" stroke-width="0.8"/><circle cx="676.2" cy="220.8" r="1.6" fill="none" stroke="#3f8ff2" stroke-width="0.8"/>
<rect x="696.2" y="206.2" width="5.8" height="5.4" fill="none" stroke="#d4d6d9" stroke-width="0.8"/>
<path d="M704.6,207.2H707.4V211.6M705.8,210.2L707.4,212L709,210.2" stroke="#d4d6d9" stroke-width="0.8" fill="none"/>
<rect x="704.4" y="214.2" width="5" height="5" rx="0.6" fill="none" stroke="#3f8ff2" stroke-width="0.9"/><rect x="706.4" y="216.4" width="5" height="5.4" rx="0.6" fill="none" stroke="#3f8ff2" stroke-width="0.9"/>
<path d="M536.6,264.3H551.4" stroke="#d4d6d9" stroke-width="0.8"/>
<circle cx="536.6" cy="264.3" r="1.1" fill="#2d2f32" stroke="#d4d6d9" stroke-width="0.7"/>
<circle cx="551.4" cy="264.3" r="1.1" fill="#2d2f32" stroke="#d4d6d9" stroke-width="0.7"/>
<rect x="542.4" y="262.2" width="3.2" height="4.2" fill="#2d2f32" stroke="#5a78d8" stroke-width="0.8"/>
<path d="M546.8000000000001,272.6H552.4M549.6,269.8V275.40000000000003" stroke="#18c21c" stroke-width="1.4"/>
<path d="M576.1,264.0V260.1" stroke="#3f8ff2" stroke-width="0.9"/><path d="M574.4,260.8L576.1,258.20000000000005L577.8000000000001,260.8z" fill="#3f8ff2"/>
<path d="M568.6,273.6A7.5,6.6 0 0 1 583.6,273.6" stroke="#3f8ff2" stroke-width="1" fill="none"/>
<path d="M568.6,273.6H583.6" stroke="#d4d6d9" stroke-width="1"/>
<circle cx="568.6" cy="273.6" r="1.3" fill="#2d2f32" stroke="#d4d6d9" stroke-width="0.7"/>
<circle cx="583.6" cy="273.6" r="1.3" fill="#2d2f32" stroke="#d4d6d9" stroke-width="0.7"/>
<path d="M608.1,258.6V262.5" stroke="#3f8ff2" stroke-width="0.9"/><path d="M606.4,261.8L608.1,264.4L609.8000000000001,261.8z" fill="#3f8ff2"/>
<path d="M600.6,273.6A7.5,6.6 0 0 1 615.6,273.6" stroke="#a8aaae" stroke-width="1" fill="none"/>
<path d="M600.6,273.6H615.6" stroke="#3f8ff2" stroke-width="1"/>
<circle cx="600.6" cy="273.6" r="1.3" fill="#2d2f32" stroke="#d4d6d9" stroke-width="0.7"/>
<circle cx="615.6" cy="273.6" r="1.3" fill="#2d2f32" stroke="#d4d6d9" stroke-width="0.7"/>
<path d="M640.3,264.59999999999997V260.7" stroke="#3f8ff2" stroke-width="0.9"/><path d="M638.5999999999999,261.4L640.3,258.8L642.0,261.4z" fill="#3f8ff2"/>
<path d="M633.0999999999999,273.6L640.3,267L647.5,273.6" stroke="#3f8ff2" stroke-width="0.9" fill="none"/>
<path d="M633.0999999999999,273.6H647.5" stroke="#d4d6d9" stroke-width="0.9"/>
<rect x="639.0" y="265.7" width="2.6" height="2.6" fill="#2d2f32" stroke="#3f8ff2" stroke-width="0.7"/>
<rect x="631.8" y="272.3" width="2.6" height="2.6" fill="#2d2f32" stroke="#d4d6d9" stroke-width="0.7"/>
<rect x="646.2" y="272.3" width="2.6" height="2.6" fill="#2d2f32" stroke="#d4d6d9" stroke-width="0.7"/>
<circle cx="640.3" cy="273.6" r="1.3" fill="#2d2f32" stroke="#3f8ff2" stroke-width="0.7"/>
<path d="M665.2,263.7H680.2" stroke="#d4d6d9" stroke-width="0.8"/>
<circle cx="665.2" cy="263.7" r="1.1" fill="#2d2f32" stroke="#d4d6d9" stroke-width="0.7"/>
<circle cx="680.2" cy="263.7" r="1.1" fill="#2d2f32" stroke="#d4d6d9" stroke-width="0.7"/>
<path d="M675.6,270L680.4,274.8M680.4,270L675.6,274.8" stroke="#e0202c" stroke-width="1.3"/>
<path d="M704.5,263.4V259.7" stroke="#3f8ff2" stroke-width="0.9"/><path d="M702.8,260.4L704.5,257.8L706.2,260.4z" fill="#3f8ff2"/>
<path d="M697,265H711.8" stroke="#3f8ff2" stroke-width="0.9"/><path d="M697,265V273.6M711.8,265V273.6" stroke="#3f8ff2" stroke-width="0.8" stroke-dasharray="1.4,1.2"/>
<path d="M697,273.6H711.8" stroke="#d4d6d9" stroke-width="0.9"/>
<circle cx="697" cy="265" r="1.2" fill="#2d2f32" stroke="#3f8ff2" stroke-width="0.7"/>
<circle cx="711.8" cy="265" r="1.2" fill="#2d2f32" stroke="#3f8ff2" stroke-width="0.7"/>
<circle cx="697" cy="273.6" r="1.2" fill="#2d2f32" stroke="#d4d6d9" stroke-width="0.7"/>
<circle cx="711.8" cy="273.6" r="1.2" fill="#2d2f32" stroke="#d4d6d9" stroke-width="0.7"/>
<path d="M537.9,305.2V292.79999999999995" stroke="#d4d6d9" stroke-width="1.04" fill="none"/>
<path d="M537.9,305.2H550.0999999999999" stroke="#d29a2e" stroke-width="1.04" fill="none"/>
<path d="M536.06,293.2L537.9,289.79999999999995L539.74,293.2z" fill="#3f8ff2"/>
<path d="M549.6999999999999,303.36L553.0999999999999,305.2L549.6999999999999,307.03999999999996z" fill="#3f8ff2"/>
<path d="M542.2,292.9A7.9,7.9 0 0 1 549.4,299.9" stroke="#d29a2e" stroke-width="0.96" fill="none"/>
<circle cx="537.9" cy="305.2" r="1.6800000000000002" fill="#3f8ff2"/>
<path d="M570.6,298.9H582.1999999999999M576.4,293.09999999999997V304.7" stroke="#3f8ff2" stroke-width="0.9" fill="none"/>
<path d="M574.9,294.59999999999997L576.4,293.09999999999997L577.9,294.59999999999997M574.9,303.2L576.4,304.7L577.9,303.2M572.1,297.4L570.6,298.9L572.1,300.4M580.6999999999999,297.4L582.1999999999999,298.9L580.6999999999999,300.4" stroke="#3f8ff2" stroke-width="0.9" fill="none"/>
<path d="M599.9000000000001,297.4H611.5M605.7,291.59999999999997V303.2" stroke="#3f8ff2" stroke-width="0.9" fill="none"/>
<path d="M604.2,293.09999999999997L605.7,291.59999999999997L607.2,293.09999999999997M604.2,301.7L605.7,303.2L607.2,301.7M601.4000000000001,295.9L599.9000000000001,297.4L601.4000000000001,298.9M610.0,295.9L611.5,297.4L610.0,298.9" stroke="#3f8ff2" stroke-width="0.9" fill="none"/>
<path d="M614.6,299.6L611.6,303H614.6L612.2,306.2" stroke="#d29a2e" stroke-width="1" fill="none"/>
<path d="M644.6,303A7,7 0 1 0 638.6,305" stroke="#3f8ff2" stroke-width="0.9" fill="none"/>
<path d="M636.8,303.2L639.4,305.2L637.2,307.4" stroke="#3f8ff2" stroke-width="0.9" fill="none"/>
<rect x="638.8" y="297.2" width="1.8" height="1.8" fill="#9a9da2"/>
<path d="M672.7,290V307.2" stroke="#d4d6d9" stroke-width="0.8"/>
<path d="M670.6,293.2V303.6H665.2z" fill="none" stroke="#9a9da2" stroke-width="0.8"/>
<path d="M674.8,293.2V303.6H680.6z" fill="none" stroke="#3f8ff2" stroke-width="0.9"/>
<path d="M696.2,292.6H712.8V305.6" stroke="#3f8ff2" stroke-width="0.9" fill="none"/>
<path d="M696.2,292.6V299.6M705,305.6H712.8" stroke="#d4d6d9" stroke-width="0.8" fill="none"/>
<rect x="696.2" y="299.6" width="8.8" height="6" fill="none" stroke="#d4d6d9" stroke-width="0.9"/>
<path d="M706.4,298.6L711,294.2M708.2,294.2H711V297" stroke="#d4d6d9" stroke-width="0.8" fill="none"/>
<path d="M546.6,326.2H552.6V335.8H546.6" stroke="#d4d6d9" stroke-width="0.9" fill="none"/>
<path d="M546.6,326.2H535.4V335.8H546.6" stroke="#3f8ff2" stroke-width="0.9" fill="none"/>
<path d="M546.6,323.2V337.6" stroke="#d4d6d9" stroke-width="0.9"/>
<path d="M567.4,330.4H577" stroke="#d4d6d9" stroke-width="0.9"/><path d="M577,330.4H581.6" stroke="#7a7d82" stroke-width="0.8"/>
<path d="M604.4,326.4H599.8V336.6H616.8V326.4H612.2" stroke="#c2c4c8" stroke-width="0.8" fill="none"/>
<path d="M604.5,323.6V329.4M612.1,323.6V329.4" stroke="#3f8ff2" stroke-width="1.1"/>
<path d="M635.6,338.2V328A5.4,5.4 0 0 1 646.4,328" stroke="#3f8ff2" stroke-width="0.9" fill="none"/><path d="M635.6,338.2H641" stroke="#3f8ff2" stroke-width="0.9"/>
<path d="M639,336.4V329.6A2.2,2.2 0 0 1 643.4,329.6V330.6" stroke="#d4d6d9" stroke-width="0.9" fill="none"/>
<path d="M664,339V332.6M674.2,322.6H681" stroke="#8a8d92" stroke-width="0.8"/>
<path d="M664,332.6A10.2,10.2 0 0 1 674.2,322.6" stroke="#3f8ff2" stroke-width="1.1" fill="none"/>
<path d="M696.2,339.4V332.4M706,322.6H713" stroke="#8a8d92" stroke-width="0.8"/>
<path d="M696.2,332.4L706,322.6" stroke="#3f8ff2" stroke-width="1.1" fill="none"/>
<rect x="537.2" y="368.09999999999997" width="2.6" height="2.6" fill="none" stroke="#d4d6d9" stroke-width="0.7"/>
<rect x="541.1" y="364.3" width="2.6" height="2.6" fill="none" stroke="#d4d6d9" stroke-width="0.7"/>
<rect x="544.9000000000001" y="360.5" width="2.6" height="2.6" fill="none" stroke="#d4d6d9" stroke-width="0.7"/>
<rect x="549.1" y="356.3" width="2.6" height="2.6" fill="none" stroke="#d4d6d9" stroke-width="0.7"/>
<path d="M537.5,368.4l-2.2,-2.2" stroke="#5aa84a" stroke-width="0.7"/>
<path d="M541.4,364.6l-2.2,-2.2" stroke="#5aa84a" stroke-width="0.7"/>
<path d="M545.2,360.8l-2.2,-2.2" stroke="#5aa84a" stroke-width="0.7"/>
<circle cx="573.9" cy="364.9" r="5.8" fill="none" stroke="#d4d6d9" stroke-width="0.9"/>
<path d="M578,360.6L580.4,358.2" stroke="#d4d6d9" stroke-width="0.8"/>
<path d="M581.6,354.4V359.6M579,357H584.2M579.8,355.2L583.4,358.8M583.4,355.2L579.8,358.8" stroke="#f0a52c" stroke-width="0.9"/>
<path d="M626.8,239V255L630.6,251.8L633.8,259.4L636.6,258.2L633.6,251L639.8,251z" fill="#ffffff" stroke="#2a2a2a" stroke-width="0.6" stroke-linejoin="round"/>
<path d="M525.6,236.4L527.7,246.2" stroke="#1f7df0" stroke-width="1.15"/>
<path d="M527.6,211.4H524.3V216.8H527.6" fill="none" stroke="#c4c6c9" stroke-width="0.8"/>
</svg>
</div>
</body>
</html>
